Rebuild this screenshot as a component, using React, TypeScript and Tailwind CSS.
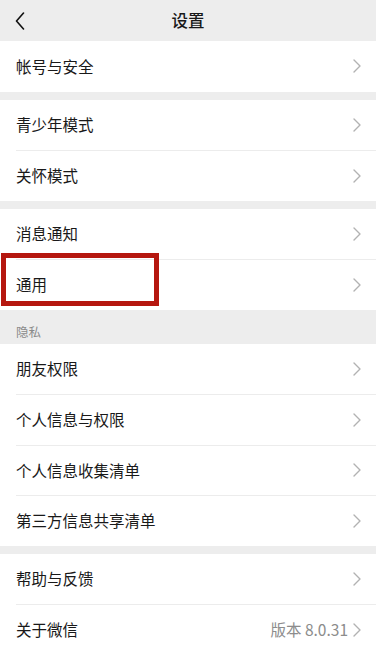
import React from 'react';

type Item = { t: string; extra?: string; highlight?: boolean };

const groups: { title?: string; items: Item[] }[] = [
  { items: [{ t: '帐号与安全' }] },
  { items: [{ t: '青少年模式' }, { t: '关怀模式' }] },
  { items: [{ t: '消息通知' }, { t: '通用', highlight: true }] },
  {
    title: '隐私',
    items: [{ t: '朋友权限' }, { t: '个人信息与权限' }, { t: '个人信息收集清单' }, { t: '第三方信息共享清单' }],
  },
  { items: [{ t: '帮助与反馈' }, { t: '关于微信', extra: '版本 8.0.31' }] },
];

function Chevron() {
  return (
    <svg width="8" height="14" viewBox="0 0 8 14" fill="none" className="shrink-0">
      <path d="M1 1l6 6-6 6" stroke="#b2b2b2" strokeWidth="1.4" strokeLinecap="round" strokeLinejoin="round" />
    </svg>
  );
}

export default function App() {
  return (
    <div
      className="w-[376px] h-[650px] overflow-hidden bg-[#ededed] text-[#191919]"
      style={{ fontFamily: '"Noto Sans CJK SC", "Noto Sans", sans-serif' }}
    >
      {/* Header */}
      <div className="h-[41px] flex items-center relative">
        <svg width="10" height="18" viewBox="0 0 10 18" fill="none" className="ml-[15px]">
          <path d="M8.5 1L1.5 9l7 8" stroke="#111" strokeWidth="1.6" strokeLinecap="round" strokeLinejoin="round" />
        </svg>
        <div className="absolute left-0 right-0 top-0 h-[41px] flex items-center justify-center text-[16.5px] font-medium pointer-events-none">
          设置
        </div>
      </div>

      {groups.map((g, gi) => (
        <div key={gi} className={g.title ? '' : gi === 0 ? '' : 'mt-[8px]'}>
          {g.title && (
            <div className="h-[34px] pl-[16px] pt-[11px] flex items-center text-[12.5px] text-[#8a8a8a]">{g.title}</div>
          )}
          <div className="bg-white">
            {g.items.map((it, i) => (
              <div key={i} className="relative h-[50.5px] pl-[16px]">
                <div
                  className={`h-full flex items-center pr-[15px] ${
                    i > 0 ? 'border-t border-[#ececec]' : ''
                  }`}
                >
                  <span className="flex-1 text-[15.5px]">{it.t}</span>
                  {it.extra && <span className="mr-[5px] text-[15.5px] text-[#8c8c8c]">{it.extra}</span>}
                  <Chevron />
                </div>
                {it.highlight && (
                  <div className="absolute left-[1px] top-[-6px] w-[158px] h-[53px] border-[5px] border-[#b5170f]" />
                )}
              </div>
            ))}
          </div>
        </div>
      ))}
    </div>
  );
}
